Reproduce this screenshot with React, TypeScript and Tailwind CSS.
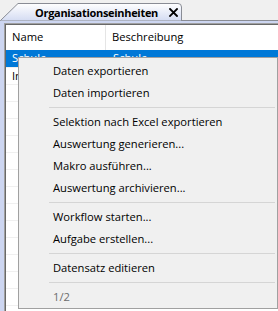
import React from "react";

type Entry = { label: string; sep?: false; disabled?: boolean } | { sep: true };

const entries: Entry[] = [
  { label: "Daten exportieren" },
  { label: "Daten importieren" },
  { sep: true },
  { label: "Selektion nach Excel exportieren" },
  { label: "Auswertung generieren..." },
  { label: "Makro ausführen..." },
  { label: "Auswertung archivieren..." },
  { sep: true },
  { label: "Workflow starten..." },
  { label: "Aufgabe erstellen..." },
  { sep: true },
  { label: "Datensatz editieren" },
  { sep: true },
  { label: "1/2", disabled: true },
];

const rows = ["Schule", "Intern", "", "", "", "", "", "", "", "", "", "", "", "", "", ""];

export default function App() {
  const font = { fontFamily: '"Segoe UI", "Open Sans", "Liberation Sans", sans-serif' };
  return (
    <div
      className="relative w-[278px] h-[311px] overflow-hidden bg-[#f0f0f0] text-[11px] text-black"
      style={font}
    >
      {/* tab strip */}
      <div className="relative h-[21px]">
        <svg className="absolute left-0 top-0" width="278" height="21">
          <defs>
            <linearGradient id="tabg" x1="0" y1="0" x2="0" y2="1">
              <stop offset="0" stopColor="#ffffff" />
              <stop offset="1" stopColor="#d3dbf2" />
            </linearGradient>
          </defs>
          <line x1="181" y1="20.5" x2="278" y2="20.5" stroke="#898c95" />
          <path d="M0.5,21 L0.5,20.5 L18,3.5 L178,3.5 Q181.5,3.5 181.5,7 L181.5,21 Z" fill="url(#tabg)" stroke="#898c95" />
        </svg>
        <div className="relative flex items-center h-[21px] pl-[35px] pt-[3px]">
          <span className="font-bold text-[11px] tracking-[-0.3px] leading-none">Organisationseinheiten</span>
          <svg className="ml-[11px] mt-[1px]" width="9" height="9" viewBox="0 0 9 9">
            <path d="M1,1 L8,8 M8,1 L1,8" stroke="#000" strokeWidth="1.8" strokeLinecap="square" />
          </svg>
        </div>
      </div>
      {/* panel */}
      <div className="bg-[#cdd6f1] pl-[4px] pt-[2px] h-[290px]">
        <div className="h-full bg-white border-t border-l border-[#a0a0a0]">
          <div className="h-full border-t border-l border-[#696969]">
            <div className="flex h-[25px] items-center">
              <div className="w-[100px] pl-[6px] h-full flex items-center border-r border-[#e5e5e5] text-[11.2px]">Name</div>
              <div className="pl-[6px] text-[11.2px]">Beschreibung</div>
            </div>
            {rows.map((r, i) => (
              <div
                key={i}
                className={
                  i === 0
                    ? "flex h-[17px] items-center bg-[#0078d7] text-white text-[11.2px]"
                    : "flex h-[17px] items-center border-t border-[#f0f0f0] text-[11.2px]"
                }
              >
                <div className="w-[101px] pl-[6px]">{r}</div>
                <div className="pl-[6px]">{i === 0 ? r : ""}</div>
              </div>
            ))}
          </div>
        </div>
      </div>
      {/* context menu */}
      <div className="absolute left-[18px] top-[57px] w-[260px] bg-[#f0f0f0] border border-[#a0a0a0] pt-[2px] text-[11.2px]">
        {entries.map((e, i) =>
          e.sep ? (
            <div key={i} className="h-[7px] flex items-center pl-[30px] pr-[2px]">
              <div className="h-px w-full bg-[#d5d5d5]" />
            </div>
          ) : (
            <div
              key={i}
              className={
                "h-[22px] flex items-center pl-[34px] " + (e.disabled ? "text-[#6d6d6d]" : "text-black")
              }
            >
              {e.label}
            </div>
          )
        )}
      </div>
    </div>
  );
}
